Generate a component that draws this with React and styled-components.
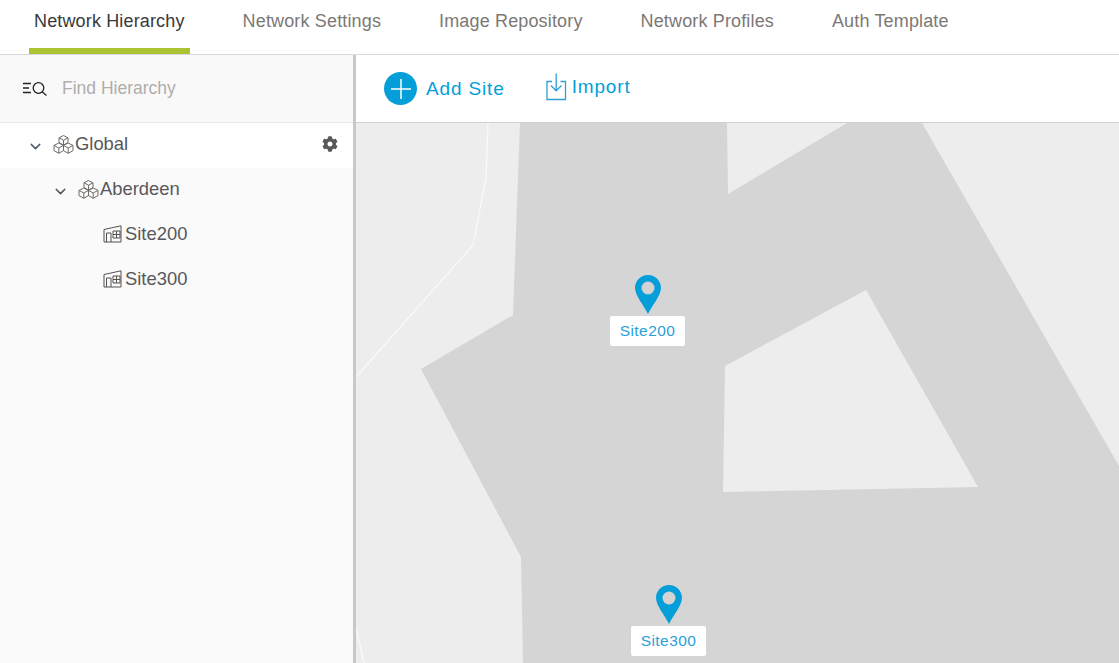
import React from "react";
import styled, { createGlobalStyle } from "styled-components";
import { FaCog } from "react-icons/fa";
import { LuChevronDown } from "react-icons/lu";

const GlobalStyle = createGlobalStyle`
  html, body {
    margin: 0;
    padding: 0;
    background: #ffffff;
    font-family: "Liberation Sans", Arial, sans-serif;
  }
  * { box-sizing: border-box; }
`;

const tabs = [
  "Network Hierarchy",
  "Network Settings",
  "Image Repository",
  "Network Profiles",
  "Auth Template",
];

const CubesIcon = () => (
  <svg width="21" height="19" viewBox="0 0 21 19" fill="none" stroke="#6f6a66" strokeWidth="1">
    <path d="M10.5 0.5 L15 2.8 V7.6 L10.5 10 L6 7.6 V2.8 Z M6 2.8 L10.5 5.2 L15 2.8 M10.5 5.2 V10" />
    <path d="M5.8 8 L10.5 10.4 V15.6 L5.8 18.3 L1 15.6 V10.4 Z M1 10.4 L5.8 13 L10.5 10.4 M5.8 13 V18.3" />
    <path d="M15.2 8 L20 10.4 V15.6 L15.2 18.3 L10.5 15.6 V10.4 Z M10.5 10.4 L15.2 13 L20 10.4 M15.2 13 V18.3" />
  </svg>
);

const BuildingIcon = () => (
  <svg width="19" height="18" viewBox="0 0 19 18" fill="none" stroke="#55514e" strokeWidth="1">
    <path d="M1 17 V4.5 L18 0.8 V17 Z" />
    <path d="M3.5 17 V8 H8 V17" />
    <path d="M10 6 H13.5 V9.5 H10 Z M13.5 6 H17 V9.5 H13.5 Z M10 9.5 H13.5 V13 H10 Z M13.5 9.5 H17 V13 H13.5 Z" />
  </svg>
);

const SearchListIcon = () => (
  <svg width="26" height="15" viewBox="0 0 26 15" fill="none" stroke="#222" strokeWidth="1.3">
    <path d="M1 2.5 H9 M1 7 H7 M1 11.5 H9" />
    <circle cx="16.5" cy="7" r="5.3" />
    <path d="M20.3 11 L24.5 14.5" />
  </svg>
);

const ImportIcon = () => (
  <svg width="21" height="28" viewBox="0 0 21 28" fill="none" stroke="#2f9fd8" strokeWidth="1.3">
    <path d="M6 8.5 H1 V26.5 H19.5 V8.5 H14.5" />
    <path d="M10.2 0.5 V17.5 M5 12.5 L10.2 17.8 L15.5 12.5" />
  </svg>
);

const PinIcon = () => (
  <svg width="26" height="39" viewBox="0 0 26 39">
    <path
      fill="#049fd9"
      d="M13 0 C5.8 0 0 5.8 0 13 C0 20 9 31 13 39 C17 31 26 20 26 13 C26 5.8 20.2 0 13 0 Z"
    />
    <circle cx="13" cy="13" r="6.5" fill="#d3d3d3" />
  </svg>
);

const TreeNode = ({ level, icon, label, expanded, active, action }) => (
  <Row $active={active} $level={level}>
    <Caret>{expanded && <LuChevronDown size={17} strokeWidth={2} />}</Caret>
    <NodeIcon>{icon}</NodeIcon>
    <NodeLabel>{label}</NodeLabel>
    {action && <RowAction>{action}</RowAction>}
  </Row>
);

const Pin = ({ x, y, label }) => (
  <PinWrap style={{ left: x, top: y }}>
    <PinIcon />
    <PinLabel>{label}</PinLabel>
  </PinWrap>
);

export default function App() {
  return (
    <Page>
      <GlobalStyle />
      <TabBar>
        {tabs.map((tab, i) => (
          <Tab key={tab} $active={i === 0}>
            {tab}
          </Tab>
        ))}
      </TabBar>
      <Body>
        <Sidebar>
          <SearchBar>
            <SearchListIcon />
            <SearchText>Find Hierarchy</SearchText>
          </SearchBar>
          <Tree>
            <TreeNode
              level={0}
              expanded
              active
              icon={<CubesIcon />}
              label="Global"
              action={<FaCog size={16} />}
            />
            <TreeNode level={1} expanded icon={<CubesIcon />} label="Aberdeen" />
            <TreeNode level={2} icon={<BuildingIcon />} label="Site200" />
            <TreeNode level={2} icon={<BuildingIcon />} label="Site300" />
          </Tree>
        </Sidebar>
        <Main>
          <Toolbar>
            <AddButton>
              <PlusCircle>
                <svg width="24" height="24" viewBox="0 0 24 24" stroke="#fff" strokeWidth="1.5">
                  <path d="M12 2 V22 M2 12 H22" />
                </svg>
              </PlusCircle>
              Add Site
            </AddButton>
            <ImportButton>
              <ImportIcon />
              Import
            </ImportButton>
          </Toolbar>
          <MapArea>
            <MapSvg viewBox="0 0 763 540" preserveAspectRatio="none">
              <path
                fillRule="evenodd"
                fill="#d5d5d5"
                d="M164 0 L157 192 L65 246 L165 434 L167 540 H763 V343 L566 0 H491 L372 71 L371 0 Z M510 167 L622 364 L367 369 L369 243 Z"
              />
              <path d="M132 0 L130 55 L117 122 L0 254" fill="none" stroke="#fafafa" strokeWidth="1.2" />
              <path d="M0 505 L8 540" fill="none" stroke="#fafafa" strokeWidth="1.2" />
            </MapSvg>
            <Pin x={254} y={152} label="Site200" />
            <Pin x={275} y={462} label="Site300" />
          </MapArea>
        </Main>
      </Body>
    </Page>
  );
}

const Page = styled.div`
  width: 1119px;
  height: 663px;
  overflow: hidden;
  display: flex;
  flex-direction: column;
  background: #fff;
`;

const TabBar = styled.div`
  height: 55px;
  flex: none;
  display: flex;
  padding-left: 29px;
  gap: 48px;
  border-bottom: 1px solid #d9d9d9;
`;

const Tab = styled.div`
  height: 54px;
  padding: 11px 5px 0;
  font-size: 18px;
  letter-spacing: 0.15px;
  line-height: 20px;
  color: ${(p) => (p.$active ? "#39393b" : "#7c7876")};
  border-bottom: 6px solid ${(p) => (p.$active ? "#abc233" : "transparent")};
`;

const Body = styled.div`
  flex: 1;
  display: flex;
  min-height: 0;
`;

const Sidebar = styled.div`
  width: 356px;
  flex: none;
  background: #fafafa;
  border-right: 3px solid #c8c8c8;
  display: flex;
  flex-direction: column;
`;

const SearchBar = styled.div`
  height: 68px;
  flex: none;
  display: flex;
  align-items: center;
  padding-left: 22px;
  gap: 14px;
  background: #f9f9f9;
  border-bottom: 1px solid #e8e8e8;
`;

const SearchText = styled.div`
  font-size: 17.5px;
  color: #b0adaa;
`;

const Tree = styled.div`
  display: flex;
  flex-direction: column;
`;

const Row = styled.div`
  height: 45px;
  display: flex;
  align-items: center;
  padding: 0 0 3px ${(p) => 27 + p.$level * 25}px;
  background: ${(p) => (p.$active ? "#ffffff" : "transparent")};
`;

const Caret = styled.span`
  width: 26px;
  flex: none;
  display: flex;
  padding-top: 4px;
  color: #4d5a66;
`;

const NodeIcon = styled.span`
  width: 22px;
  flex: none;
  display: flex;
`;

const NodeLabel = styled.span`
  font-size: 18.4px;
  color: #58585a;
`;

const RowAction = styled.span`
  margin-left: auto;
  margin-right: 15px;
  display: flex;
  color: #58585a;
`;

const Main = styled.div`
  flex: 1;
  min-width: 0;
  display: flex;
  flex-direction: column;
`;

const Toolbar = styled.div`
  height: 68px;
  flex: none;
  display: flex;
  align-items: center;
  padding-left: 28px;
  gap: 41px;
  border-bottom: 1px solid #d0d0d0;
`;

const AddButton = styled.div`
  display: flex;
  align-items: center;
  gap: 9px;
  font-size: 19px;
  letter-spacing: 0.85px;
  color: #049fd9;
`;

const PlusCircle = styled.span`
  width: 33px;
  height: 33px;
  border-radius: 50%;
  background: #049fd9;
  display: flex;
  align-items: center;
  justify-content: center;
`;

const ImportButton = styled.div`
  display: flex;
  align-items: center;
  gap: 5px;
  font-size: 19px;
  letter-spacing: 0.85px;
  color: #049fd9;
  margin-top: -3px;
`;

const MapArea = styled.div`
  position: relative;
  flex: 1;
  background: #ededed;
  overflow: hidden;
`;

const MapSvg = styled.svg`
  position: absolute;
  inset: 0;
  width: 100%;
  height: 100%;
`;

const PinWrap = styled.div`
  position: absolute;
  width: 75px;
  display: flex;
  flex-direction: column;
  align-items: center;
  gap: 2px;
`;

const PinLabel = styled.div`
  width: 75px;
  height: 30px;
  background: #fff;
  border-radius: 2px;
  font-size: 15.5px;
  letter-spacing: 0.45px;
  line-height: 30px;
  text-align: center;
  color: #2a9fd8;
`;
